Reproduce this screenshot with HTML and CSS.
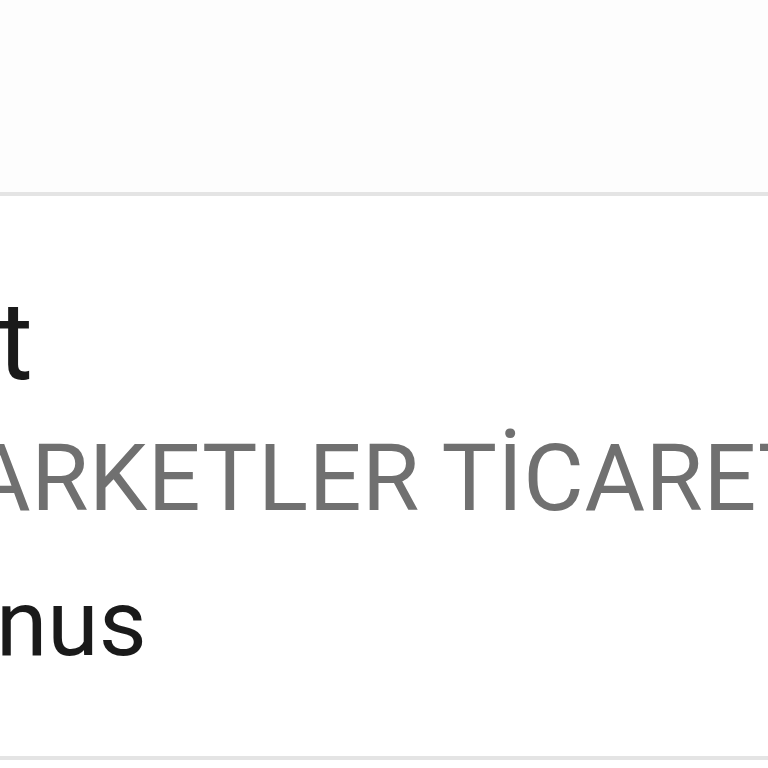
FILE: index.html
```html
<!DOCTYPE html>
<html lang="tr">
<head>
  <meta charset="UTF-8" />
  <meta name="viewport" content="width=device-width, initial-scale=1.0"/>
  <title>Harcama</title>
  <link rel="stylesheet" href="styles.css">
</head>
<body>

  <header class="top"></header>

  <div class="divider"></div>

  <section class="item">
    <div class="title">t</div>
    <div class="company">ARKETLER TİCARET A.Ş.</div>
    <div class="label">nus</div>
  </section>

  <div class="divider"></div>

</body>
</html>
```

FILE: styles.css
```css
* { box-sizing: border-box; }

body {
  margin: 0;
  font-family: Roboto, 'Noto Sans', sans-serif;
  background: #fff;
  overflow: hidden;
}

.top {
  height: 192px;
  background: #fdfdfd;
}

.divider {
  height: 4px;
  background: #e4e4e4;
}

.item {
  padding: 81px 0 60px;
  white-space: nowrap;
  overflow: hidden;
}

.title {
  font-size: 110px;
  line-height: 129px;
  color: #1a1a1a;
  margin-left: -3px;
}

.company {
  font-size: 93px;
  line-height: 146px;
  letter-spacing: 0.5px;
  color: #707070;
  margin-left: -30px;
}

.label {
  font-size: 93px;
  line-height: 144px;
  color: #1a1a1a;
  margin-left: -4px;
}
```
